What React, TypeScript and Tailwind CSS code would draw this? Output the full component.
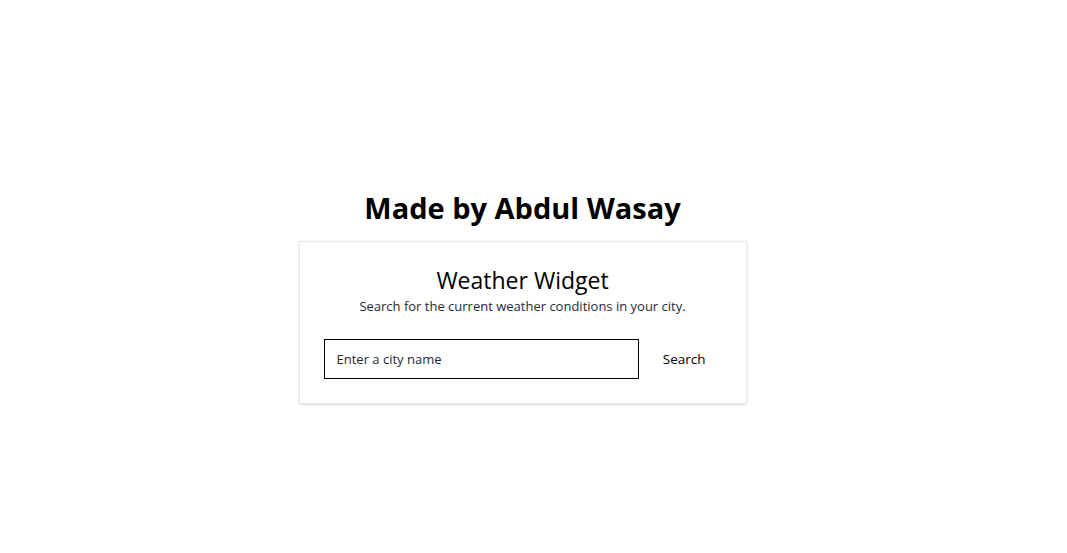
import React from 'react';

const App = () => {
  return (
    <div className="min-h-screen bg-white pr-[22px] pt-[187px] flex flex-col items-center font-['Open_Sans',sans-serif] text-black">
      <h1 className="text-[29px] font-bold mb-[12px] leading-[42px]">Made by Abdul Wasay</h1>
      <div className="w-[448px] border border-gray-200 shadow-sm px-6 pt-[22px] pb-6">
        <div className="text-center">
          <h2 className="text-[23px] leading-8">Weather Widget</h2>
          <p className="text-[13px] leading-5 text-gray-800">Search for the current weather conditions in your city.</p>
        </div>
        <div className="flex gap-2 mt-[23px]">
          <input
            type="text"
            placeholder="Enter a city name"
            className="flex-1 h-10 border border-black px-3 text-[13px] placeholder:text-gray-800 outline-none"
          />
          <button className="px-4 h-10 text-[13.5px] font-medium">Search</button>
        </div>
      </div>
    </div>
  );
};

export default App;
